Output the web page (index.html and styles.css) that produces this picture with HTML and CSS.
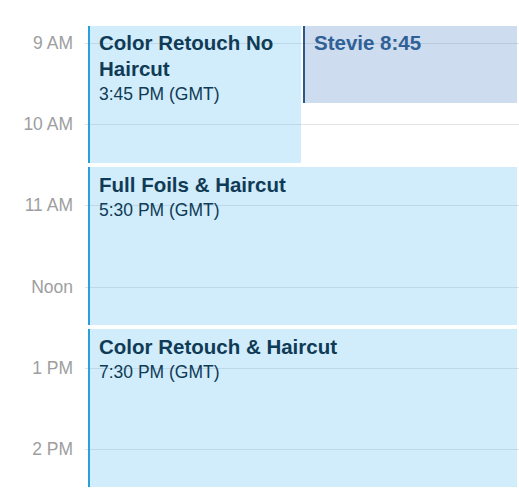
FILE: index.html
```html
<!DOCTYPE html>
<html>
<head>
<meta charset="utf-8">
<link rel="stylesheet" href="styles.css">
</head>
<body>
<div class="day">
  <div class="hours">
    <div class="hour"><span class="label">9 AM</span><span class="line"></span></div>
    <div class="hour"><span class="label">10 AM</span><span class="line"></span></div>
    <div class="hour"><span class="label">11 AM</span><span class="line"></span></div>
    <div class="hour"><span class="label">Noon</span><span class="line"></span></div>
    <div class="hour"><span class="label">1 PM</span><span class="line"></span></div>
    <div class="hour"><span class="label">2 PM</span><span class="line"></span></div>
  </div>
  <div class="event ev-retouch-no">
    <div class="title">Color Retouch No Haircut</div>
    <div class="time">3:45 PM (GMT)</div>
  </div>
  <div class="event stevie">
    <div class="title">Stevie 8:45</div>
  </div>
  <div class="event ev-foils">
    <div class="title">Full Foils &amp; Haircut</div>
    <div class="time">5:30 PM (GMT)</div>
  </div>
  <div class="event ev-retouch">
    <div class="title">Color Retouch &amp; Haircut</div>
    <div class="time">7:30 PM (GMT)</div>
  </div>
</div>
</body>
</html>
```
FILE: styles.css
```css
html, body {
  margin: 0;
  padding: 0;
  background: #ffffff;
}
body {
  font-family: "Liberation Sans", Arial, Helvetica, sans-serif;
  width: 519px;
  height: 500px;
  overflow: hidden;
}
.day {
  position: relative;
  height: 500px;
  overflow: hidden;
}
.hours {
  padding-top: 43px;
  display: flex;
  flex-direction: column;
}
.hour {
  height: 81.2px;
  display: flex;
  align-items: flex-start;
}
.hour:last-child {
  height: 12px;
}
.label {
  width: 73px;
  margin-top: -12px;
  line-height: 24px;
  font-size: 17.5px;
  color: #9e9e9e;
  text-align: right;
  flex: none;
}
.line {
  margin-left: 12px;
  flex: 1;
  border-top: 1px solid #e3e3e3;
}
.event {
  position: absolute;
  box-sizing: border-box;
  background: rgba(102, 192, 242, 0.3);
  border-left: 2px solid #2aa0da;
  padding: 4px 8px 0 9px;
  color: #0f3b56;
  overflow: hidden;
}
.title {
  font-size: 20.5px;
  font-weight: bold;
  line-height: 26px;
}
.time {
  font-size: 17.5px;
  line-height: 24px;
}
.ev-retouch-no {
  left: 88px;
  top: 26px;
  width: 213px;
  height: 137px;
}
.stevie {
  left: 303px;
  top: 26px;
  width: 214px;
  height: 77px;
  background: rgba(100, 145, 205, 0.32);
  border-left-color: #2b5886;
  padding-left: 9px;
  color: #2f6096;
}
.ev-foils {
  left: 88px;
  top: 167px;
  width: 429px;
  height: 158px;
  padding-top: 5px;
}
.ev-retouch {
  left: 88px;
  top: 329px;
  width: 429px;
  height: 158px;
  padding-top: 5px;
}
```
